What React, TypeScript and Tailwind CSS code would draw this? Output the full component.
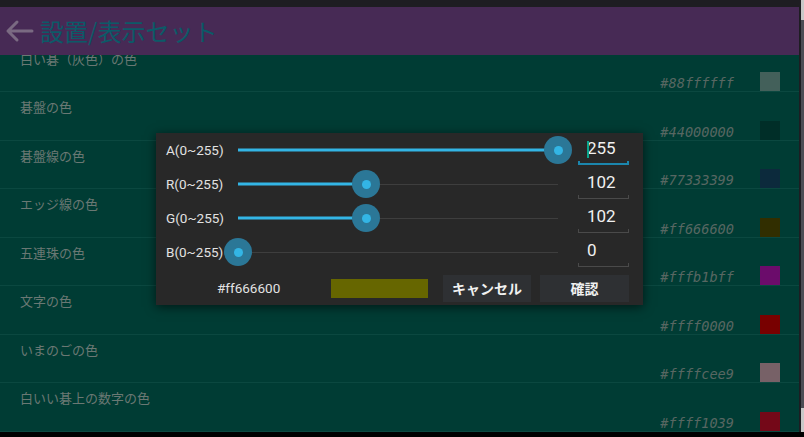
import React from 'react';

const rows = [
  { label: '白い碁（灰色）の色', hex: '#88ffffff', swatch: 'bg-[#43605a]' },
  { label: '碁盤の色', hex: '#44000000', swatch: 'bg-[#002e28]' },
  { label: '碁盤線の色', hex: '#77333399', swatch: 'bg-[#0c2a3c]' },
  { label: 'エッジ線の色', hex: '#ff666600', swatch: 'bg-[#312e00]' },
  { label: '五連珠の色', hex: '#fffb1bff', swatch: 'bg-[#6b0c6b]' },
  { label: '文字の色', hex: '#ffff0000', swatch: 'bg-[#780000]' },
  { label: 'いまのごの色', hex: '#ffffcee9', swatch: 'bg-[#776167]' },
  { label: '白いい碁上の数字の色', hex: '#ffff1039', swatch: 'bg-[#740818]' },
];

const channels = [
  { name: 'A(0~255)', value: 255, focused: true },
  { name: 'R(0~255)', value: 102 },
  { name: 'G(0~255)', value: 102 },
  { name: 'B(0~255)', value: 0 },
];

function Slider({ value }: { value: number }) {
  const pos = (value / 255) * 320;
  return (
    <div className="relative w-[320px] h-full">
      {/* inactive track */}
      <div className="absolute left-0 right-0 top-1/2 h-px bg-[#3e3e3e]" />
      {/* active track */}
      <div className="absolute left-0 top-1/2 -translate-y-1/2 h-[3px] bg-[#33b5e5]" style={{ width: pos }} />
      {/* thumb */}
      <div
        className="absolute top-1/2 -translate-x-1/2 -translate-y-1/2 w-[28px] h-[28px] rounded-full bg-[#2b7797] flex items-center justify-center"
        style={{ left: pos }}
      >
        <div className="w-[9px] h-[9px] rounded-full bg-[#33b5e5]" />
      </div>
    </div>
  );
}

function NumberField({ value, focused }: { value: number; focused?: boolean }) {
  return (
    <div className="relative w-[51px] h-[30px] ml-[20px] mt-[2px]">
      <div className="flex items-center h-[26px] pl-[9px] text-[17px] text-[#f0f0f0]">
        {focused && <span className="absolute left-[9px] top-[5px] w-[2px] h-[17px] bg-[#0aa58c]" />}
        {value}
      </div>
      <div
        className={
          focused
            ? 'absolute left-0 right-0 bottom-[1px] h-[4px] border-x-2 border-b-2 border-[#1b86ad]'
            : 'absolute left-0 right-0 bottom-[1px] h-[4px] border-x border-b border-[#4a4a4a]'
        }
      />
    </div>
  );
}

export default function App() {
  return (
    <div className="w-[804px] h-[437px] overflow-hidden bg-black flex flex-col font-['Roboto','Noto_Sans_CJK_JP',sans-serif]">
      <div className="flex h-[432px]">
        {/* Main screen */}
        <div className="w-[799px] flex flex-col">
          <div className="h-[7px] bg-[#1e1d22]" />

          {/* Action bar */}
          <div className="h-[48px] bg-[#472a55] flex items-center relative z-10">
            <svg width="30" height="24" viewBox="0 0 30 24" className="ml-[4px]" fill="none">
              <path d="M28 12H4M13 3L4 12L13 21" stroke="#7a6a82" strokeWidth="3" strokeLinecap="round" strokeLinejoin="round" />
            </svg>
            <h1 className="ml-[6px] text-[24px] leading-none text-[#0c5a68] font-['Noto_Sans_CJK_JP',sans-serif]">
              設置/表示セット
            </h1>
          </div>

          {/* Settings list (scrolled; first row runs under the action bar) */}
          <div className="relative flex-1 bg-[#003c34] overflow-hidden">
            <div className="-mt-[11.5px]">
              {rows.map((r) => (
                <div key={r.hex} className="h-[48.5px] border-b border-[#0b4840] flex flex-col pt-[6px]">
                  <div className="h-[18px] leading-[18px] pl-[20px] text-[13px] text-[#6a7873] font-['Noto_Sans_CJK_JP',sans-serif]">
                    {r.label}
                  </div>
                  <div className="flex-1 flex items-end justify-end pr-[19px]">
                    <span className="h-[19px] leading-[23px] text-[13.6px] italic text-[#586762] font-['DejaVu_Sans_Mono',monospace] mr-[26px]">
                      {r.hex}
                    </span>
                    <div className={`w-[20px] h-[19px] ${r.swatch}`} />
                  </div>
                </div>
              ))}
            </div>

            {/* Color picker dialog */}
            <div className="absolute left-[156px] top-[78px] w-[487px] h-[172px] bg-[#282828] shadow-[0_2px_10px_rgba(0,0,0,0.6)] flex flex-col">
              {channels.map((c) => (
                <div key={c.name} className="h-[34px] flex items-center">
                  <div className="w-[82px] pl-[10px] text-[13.5px] text-[#e2e2e2]">{c.name}</div>
                  <Slider value={c.value} />
                  <NumberField value={c.value} focused={c.focused} />
                </div>
              ))}
              <div className="h-[36px] flex items-center pt-[2px]">
                <div className="w-[175px] pl-[61px] text-[13.5px] text-[#e2e2e2]">#ff666600</div>
                <div className="w-[97px] h-[19px] bg-[#666600]" />
                <button className="ml-[15px] w-[88px] h-[27px] bg-[#2e3033] text-[14px] font-bold text-[#f0f0f0] font-['Noto_Sans_CJK_JP',sans-serif]">
                  キャンセル
                </button>
                <button className="ml-[9px] w-[89px] h-[27px] bg-[#2e3033] text-[14px] font-bold text-[#f0f0f0] font-['Noto_Sans_CJK_JP',sans-serif]">
                  確認
                </button>
              </div>
            </div>
          </div>
        </div>

        {/* Window scrollbar */}
        <div className="w-[5px] flex bg-[#1e1d22]">
          <div className="w-[2px]" />
          <div className="w-[3px] flex flex-col">
            <div className="h-[20px] bg-[#c8c8c8]" />
            <div className="flex-1 bg-[#4c4c54]" />
            <div className="h-[24px] bg-[#c8c8c8]" />
          </div>
        </div>
      </div>
      <div className="flex-1 bg-black" />
    </div>
  );
}
